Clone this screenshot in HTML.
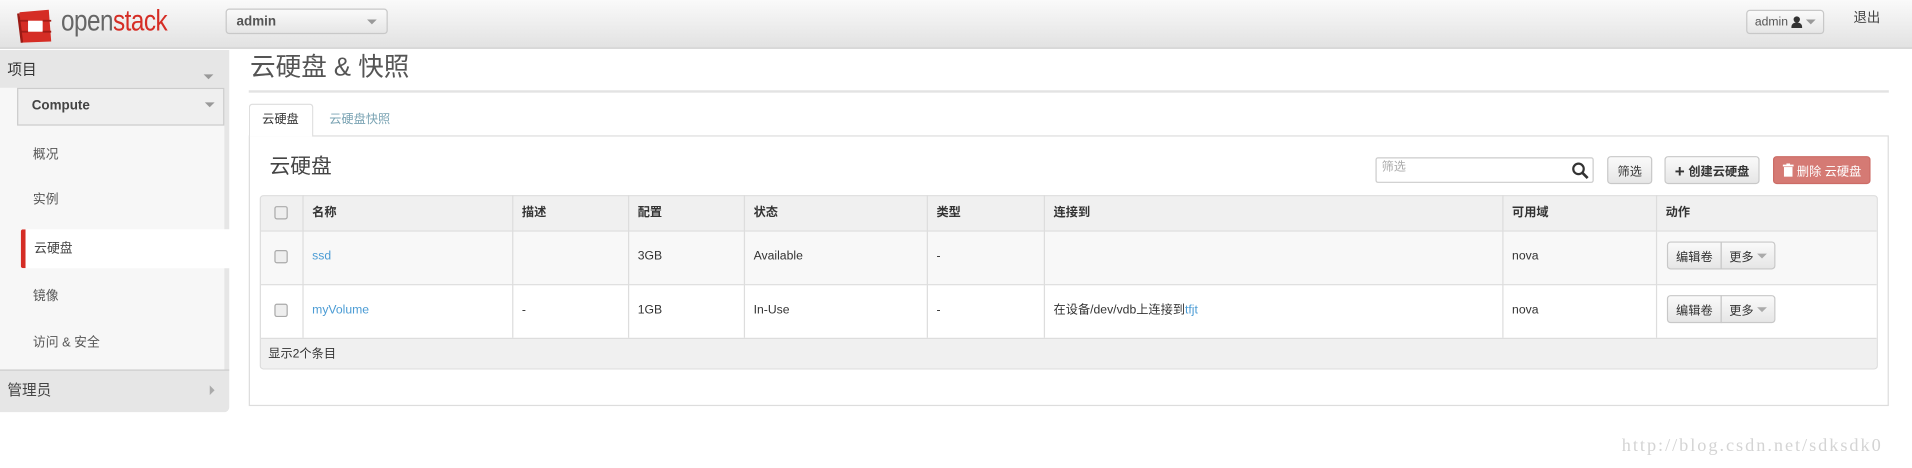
<!DOCTYPE html>
<html><head><meta charset="utf-8"><style>
*{box-sizing:border-box;margin:0;padding:0}
html,body{width:1912px;height:468px;overflow:hidden;background:#fff}
#w{position:absolute;left:0;top:0;width:1568px;height:384px;transform:scale(1.21939);transform-origin:0 0;font-family:"Liberation Sans","Noto Sans CJK SC",sans-serif;font-size:10.5px;color:#333}
.a{position:absolute;line-height:1.2}
.hdr{left:0;top:0;width:1568px;height:40px;background:linear-gradient(#fafafa,#e2e2e2);border-bottom:1px solid #ccc}
.btn{position:absolute;border:1px solid #c8c8c8;border-radius:3px;background:linear-gradient(#fafafa,#e6e6e6);font-size:10px;color:#333;display:flex;align-items:center;justify-content:center}
.caret{display:inline-block;width:0;height:0;border-left:4px solid transparent;border-right:4px solid transparent;border-top:4px solid #999}
.side{left:0;top:41px;width:188px;height:297px;background:#e6e6e6;border-radius:0 0 4px 0}
.lk{color:#4a9bd4}
</style></head><body><div id="w">
<div class="a hdr"></div>
<svg class="a" style="left:12px;top:7px" width="32" height="29" viewBox="0 0 32 29"><path d="M4 3 L28 1 L30 27 L6 28 Z" fill="#d52d25"/><rect x="11" y="10" width="12" height="9" fill="#fff"/><path d="M4 10h7M4 19h7M23 10h7M23 19h7" stroke="#a31d17" stroke-width="1.5"/><path d="M3 4 L6 28" stroke="#9b1a14" stroke-width="2"/></svg>
<div class="a" style="left:50px;top:4px;font-size:24px;letter-spacing:-0.5px;color:#666;transform:scaleX(0.83);transform-origin:0 0">open<span style="color:#d52d25">stack</span></div>
<div class="btn" style="left:185px;top:7px;width:133px;height:21px;justify-content:space-between;padding:0 8px;font-weight:bold;color:#555;font-size:11px"><span>admin</span><span class="caret"></span></div>
<div class="btn" style="left:1432px;top:8px;width:64px;height:20px;color:#555;font-size:10px">admin&nbsp;<svg width="9" height="10" viewBox="0 0 9 10"><circle cx="4.5" cy="3" r="2.6" fill="#333"/><path d="M0 10 Q0 5.5 4.5 5.5 Q9 5.5 9 10Z" fill="#333"/></svg>&nbsp;<span class="caret"></span></div>
<div class="a" style="left:1520px;top:9px;font-size:11px;color:#444">退出</div>

<div class="a side"></div>
<div class="a" style="left:0;top:72px;width:184px;height:231px;background:#f7f7f7"></div>
<div class="a" style="left:6px;top:50px;font-size:12px;color:#333">项目</div>
<div class="a" style="left:167px;top:56px"><span class="caret"></span></div>
<div class="a" style="left:14px;top:72px;width:170px;height:31px;background:#efefef;border:1px solid #ccc"></div>
<div class="a" style="left:26px;top:81px;font-size:11px;font-weight:bold;color:#444">Compute</div>
<div class="a" style="left:168px;top:79px"><span class="caret"></span></div>
<div class="a" style="left:27px;top:121px;color:#555">概况</div>
<div class="a" style="left:27px;top:158px;color:#555">实例</div>
<div class="a" style="left:17px;top:188px;width:186px;height:32px;background:#fff;border-left:4px solid #d52d25;border-radius:2px 0 0 2px"></div>
<div class="a" style="left:28px;top:198px;color:#444">云硬盘</div>
<div class="a" style="left:27px;top:237px;color:#555">镜像</div>
<div class="a" style="left:27px;top:275px;color:#555">访问 &amp; 安全</div>
<div class="a" style="left:0;top:303px;width:188px;height:1px;background:#ccc"></div>
<div class="a" style="left:6px;top:313px;font-size:12px;color:#444">管理员</div>
<div class="a" style="left:172px;top:316px;width:0;height:0;border-top:4px solid transparent;border-bottom:4px solid transparent;border-left:4px solid #aaa"></div>

<div class="a" style="left:205px;top:43px;font-size:21px;color:#555">云硬盘 &amp; 快照</div>
<div class="a" style="left:204px;top:74px;width:1345px;height:2px;background:#e3e3e3"></div>
<div class="a" style="left:204px;top:111px;width:1345px;height:222px;border:1px solid #ddd"></div>
<div class="a" style="left:204px;top:85px;width:53px;height:27px;background:#fff;border:1px solid #ddd;border-bottom:none;border-radius:3px 3px 0 0"></div>
<div class="a" style="left:215px;top:93px;font-size:10px;color:#333">云硬盘</div>
<div class="a" style="left:270px;top:93px;font-size:10px;color:#7aa3b3">云硬盘快照</div>
<div class="a" style="left:221px;top:127px;font-size:17px;color:#444">云硬盘</div>

<div class="a" style="left:1128px;top:129px;width:179px;height:21px;border:1px solid #ccc;border-radius:2px;background:#fff"></div>
<div class="a" style="left:1133px;top:132px;font-size:10px;color:#aaa">筛选</div>
<svg class="a" style="left:1289px;top:133px" width="14" height="14" viewBox="0 0 14 14"><circle cx="5.5" cy="5.5" r="4.3" fill="none" stroke="#333" stroke-width="1.8"/><path d="M8.7 8.7 L13 13" stroke="#333" stroke-width="2.2"/></svg>
<div class="btn" style="left:1318px;top:128px;width:37px;height:23px">筛选</div>
<div class="btn" style="left:1365px;top:128px;width:78px;height:23px;font-weight:bold"><span style="font-size:14px;margin-right:3px">+</span>创建云硬盘</div>
<div class="btn" style="left:1454px;top:128px;width:80px;height:23px;background:#d57a74;border-color:#cc6c66;color:#fff"><svg width="9" height="11" viewBox="0 0 9 11" style="margin-right:3px"><rect x="0" y="1" width="9" height="1.5" fill="#fff"/><rect x="3" y="0" width="3" height="1.5" fill="#fff"/><rect x="1" y="3" width="7" height="8" fill="#fff"/></svg>删除 云硬盘</div>

<div class="a" style="left:213px;top:160px;width:1327px;height:143px;border:1px solid #ddd;border-radius:3px;overflow:hidden">
<div class="a" style="left:0;top:0;width:1327px;height:29px;background:#f0f0f0;border-bottom:1px solid #ddd"></div>
<div class="a" style="left:0;top:29px;width:1327px;height:44px;background:#f8f8f8;border-bottom:1px solid #ddd"></div>
<div class="a" style="left:0;top:73px;width:1327px;height:44px;background:#fff;border-bottom:1px solid #ddd"></div>
<div class="a" style="left:0;top:117px;width:1327px;height:26px;background:#f0f0f0"></div>
</div>
<div class="a" style="left:248px;top:160px;width:1px;height:117px;background:#ddd"></div>
<div class="a" style="left:420px;top:160px;width:1px;height:117px;background:#ddd"></div>
<div class="a" style="left:515px;top:160px;width:1px;height:117px;background:#ddd"></div>
<div class="a" style="left:610px;top:160px;width:1px;height:117px;background:#ddd"></div>
<div class="a" style="left:760px;top:160px;width:1px;height:117px;background:#ddd"></div>
<div class="a" style="left:856px;top:160px;width:1px;height:117px;background:#ddd"></div>
<div class="a" style="left:1232px;top:160px;width:1px;height:117px;background:#ddd"></div>
<div class="a" style="left:1358px;top:160px;width:1px;height:117px;background:#ddd"></div>

<div class="a" style="left:225px;top:169px;width:11px;height:11px;border:1px solid #aaa;border-radius:2px;background:#eee"></div>
<div class="a" style="left:225px;top:205px;width:11px;height:11px;border:1px solid #aaa;border-radius:2px;background:#eee"></div>
<div class="a" style="left:225px;top:249px;width:11px;height:11px;border:1px solid #aaa;border-radius:2px;background:#eee"></div>

<div style="font-weight:bold;font-size:10px;color:#333">
<div class="a" style="left:256px;top:169px">名称</div>
<div class="a" style="left:428px;top:169px">描述</div>
<div class="a" style="left:523px;top:169px">配置</div>
<div class="a" style="left:618px;top:169px">状态</div>
<div class="a" style="left:768px;top:169px">类型</div>
<div class="a" style="left:864px;top:169px">连接到</div>
<div class="a" style="left:1240px;top:169px">可用域</div>
<div class="a" style="left:1366px;top:169px">动作</div>
</div>
<div style="font-size:10px;color:#333">
<div class="a lk" style="left:256px;top:205px">ssd</div>
<div class="a" style="left:523px;top:205px">3GB</div>
<div class="a" style="left:618px;top:205px">Available</div>
<div class="a" style="left:768px;top:205px">-</div>
<div class="a" style="left:1240px;top:205px">nova</div>
<div class="a lk" style="left:256px;top:249px">myVolume</div>
<div class="a" style="left:428px;top:249px">-</div>
<div class="a" style="left:523px;top:249px">1GB</div>
<div class="a" style="left:618px;top:249px">In-Use</div>
<div class="a" style="left:768px;top:249px">-</div>
<div class="a" style="left:864px;top:249px">在设备/dev/vdb上连接到<span class="lk">tfjt</span></div>
<div class="a" style="left:1240px;top:249px">nova</div>
<div class="a" style="left:220px;top:285px">显示2个条目</div>
</div>
<div class="btn" style="left:1367px;top:198px;width:45px;height:23px;border-radius:3px 0 0 3px">编辑卷</div>
<div class="btn" style="left:1411px;top:198px;width:45px;height:23px;border-radius:0 3px 3px 0">更多&nbsp;<span class="caret" style="border-top-color:#aaa"></span></div>
<div class="btn" style="left:1367px;top:242px;width:45px;height:23px;border-radius:3px 0 0 3px">编辑卷</div>
<div class="btn" style="left:1411px;top:242px;width:45px;height:23px;border-radius:0 3px 3px 0">更多&nbsp;<span class="caret" style="border-top-color:#aaa"></span></div>

<div class="a" style="left:1330px;top:357px;font-family:'Liberation Serif',serif;font-size:15px;color:#d4d4d4;letter-spacing:1.6px">http://blog.csdn.net/sdksdk0</div>
</div></body></html>
